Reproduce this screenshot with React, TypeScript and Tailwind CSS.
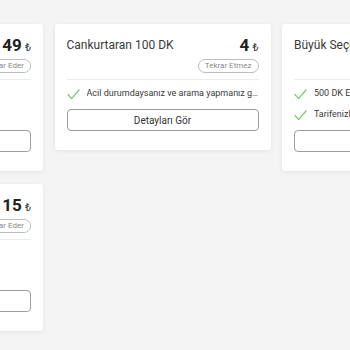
import React from 'react';

type Pkg = {
  title: string;
  price: string;
  tag: string;
  items: string[];
};

const rowOne: Pkg[] = [
  { title: 'Haftalık 5 GB', price: '49', tag: 'Tekrar Eder', items: ['5 GB İnternet', '7 gün geçerli'] },
  { title: 'Cankurtaran 100 DK', price: '4', tag: 'Tekrar Etmez', items: ['Acil durumdaysanız ve arama yapmanız gerekiyorsa bu paketi alabilirsiniz'] },
  { title: 'Büyük Seçenek Paketi', price: '39', tag: 'Tekrar Eder', items: ['500 DK Ekstra Konuşma', 'Tarifenizle birlikte kullanılır'] },
];

const rowTwo: Pkg[] = [
  { title: 'Günlük 1 GB', price: '15', tag: 'Tekrar Eder', items: ['1 GB İnternet', '1 gün geçerli'] },
];

function Check() {
  return (
    <svg width="13" height="11" viewBox="0 0 13 11" className="shrink-0">
      <path d="M1 5.5 L4.6 9.6 L12 1" fill="none" stroke="#7cc27a" strokeWidth="1.2" strokeLinecap="round" strokeLinejoin="round" />
    </svg>
  );
}

function Card({ p }: { p: Pkg }) {
  return (
    <div className="w-[216px] shrink-0 bg-white rounded-[3px] shadow-[0_1px_4px_rgba(0,0,0,0.08)] px-3 pt-3 pb-[19px]">
      <div className="flex justify-between items-start gap-2">
        <div className="min-w-0 whitespace-nowrap text-[12px] leading-[16px] text-[#3a3a3a] pt-[1px]">{p.title}</div>
        <div className="flex flex-col items-end shrink-0">
          <div className="flex items-baseline gap-[3px] text-[#222] h-[18px]">
            <span className="text-[17px] font-bold leading-[18px]">{p.price}</span>
            <span className="text-[11px] leading-[18px] text-[#444]">₺</span>
          </div>
          <div className="mt-[5px] border border-[#bdbdbd] rounded-full px-[6px] h-[14px] flex items-center whitespace-nowrap text-[8px] text-[#8a8a8a]">
            {p.tag}
          </div>
        </div>
      </div>
      <div className="mt-[6px] border-t border-[#ececec]" />
      <div className="pt-[7px] flex flex-col gap-[7px]">
        {p.items.map((it) => (
          <div key={it} className="flex items-center gap-[7px] h-[14px] min-w-0">
            <Check />
            <span className="min-w-0 text-[9px] text-[#3a3a3a] truncate">{it}</span>
          </div>
        ))}
      </div>
      <button className="mt-[8px] w-full h-[22px] border border-[#9e9e9e] rounded-[4px] text-[10px] text-[#333] bg-white">
        Detayları Gör
      </button>
    </div>
  );
}

export default function App() {
  return (
    <div className="w-[350px] h-[350px] overflow-hidden bg-[#f4f4f4] font-['Roboto',sans-serif]">
      <div className="ml-[-173px] pt-[24px] flex flex-col gap-[13px]">
        <div className="flex items-start gap-[11.5px]">
          {rowOne.map((p) => (
            <Card key={p.title} p={p} />
          ))}
        </div>
        <div className="flex items-start gap-[11.5px]">
          {rowTwo.map((p) => (
            <Card key={p.title} p={p} />
          ))}
        </div>
      </div>
    </div>
  );
}
